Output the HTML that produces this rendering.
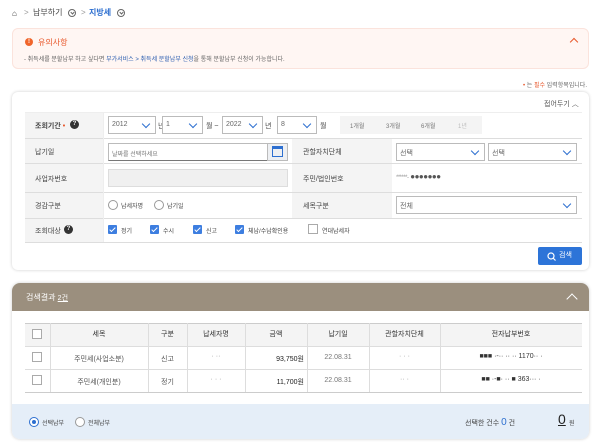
<!DOCTYPE html>
<html><head><meta charset="utf-8"><style>
*{box-sizing:border-box;margin:0;padding:0}
body{width:600px;height:442px;background:#fff;font-family:"Liberation Sans","Noto Sans CJK KR",sans-serif;font-size:7px;color:#333;position:relative;overflow:hidden}
.a{position:absolute}
.sel{position:absolute;border:1px solid #bbb;background:#fff;height:18px;font-size:7px;color:#666;padding:4px 3px}
.sel:after{content:"";position:absolute;right:6px;top:4px;width:5px;height:5px;border-right:1.4px solid #2d6fd0;border-bottom:1.4px solid #2d6fd0;transform:rotate(45deg)}
.lab{position:absolute;font-size:7px;color:#444}
.cb{position:absolute;width:9px;height:9px;background:#3d7ee0;border-radius:1px}
.cb:after{content:"";position:absolute;left:3px;top:1px;width:2px;height:5px;border-right:1.3px solid #fff;border-bottom:1.3px solid #fff;transform:rotate(45deg)}
.ecb{position:absolute;width:10px;height:10px;border:1px solid #aaa;background:#fff}
.rad{position:absolute;width:10px;height:10px;border:1px solid #999;border-radius:50%;background:#fff}
.hl{position:absolute;height:1px;background:#ddd}
.vl{position:absolute;width:1px;background:#ddd}
.th{position:absolute;top:323px;height:23px;line-height:23px;text-align:center;font-size:7px;color:#333}
.td{position:absolute;font-size:7px;color:#555;text-align:center}
.cc{position:absolute;width:8px;height:8px;border:1px solid #666;border-radius:50%}
.cc:after{content:"";position:absolute;left:2px;top:1px;width:2px;height:2px;border-right:1px solid #666;border-bottom:1px solid #666;transform:rotate(45deg)}
</style></head><body>
<div class="a" style="left:12px;top:9px;font-size:8px;color:#333">&#8962;</div>
<div class="a" style="left:24px;top:8px;font-size:8px;color:#999">&gt;</div>
<div class="a" style="left:33px;top:7px;font-size:8px;color:#444">납부하기</div>
<div class="cc" style="left:68px;top:9px"></div>
<div class="a" style="left:81px;top:8px;font-size:8px;color:#999">&gt;</div>
<div class="a" style="left:89px;top:7px;font-size:8px;color:#2d6fd0;font-weight:bold">지방세</div>
<div class="cc" style="left:117px;top:9px"></div>
<div class="a" style="left:12px;top:28px;width:577px;height:41px;background:#fff6f3;border:1px solid #fbe3dc;border-radius:6px"></div>
<div class="a" style="left:25px;top:38px;width:8px;height:8px;border-radius:50%;background:#f0652b;color:#fff;font-size:6px;text-align:center;line-height:8px;font-weight:bold">!</div>
<div class="a" style="left:38px;top:37px;font-size:8px;color:#e8572a">유의사항</div>
<div class="a" style="left:571px;top:39px;width:6px;height:6px;border-left:1.6px solid #e8572a;border-top:1.6px solid #e8572a;transform:rotate(45deg)"></div>
<div class="a" style="left:24px;top:54px;font-size:6px;color:#666">- 취득세를 분할납부 하고 싶다면 <span style="color:#2d5fb0">부가서비스 &gt; 취득세 분할납부 신청</span>을 통해 분할납부 신청이 가능합니다.</div>
<div class="a" style="left:523px;top:80px;font-size:6px;color:#666"><span style="color:#e8572a">•</span> 는 <span style="color:#e8572a">필수</span> 입력항목입니다.</div>
<div class="a" style="left:12px;top:92px;width:577px;height:178px;border-radius:6px;box-shadow:0 0 3px rgba(0,0,0,.2);background:#fff"></div>
<div class="a" style="left:544px;top:99px;font-size:7px;color:#555">접어두기 ︿</div>
<div class="a" style="left:25px;top:112px;width:78px;height:130px;background:#f4f4f4"></div>
<div class="a" style="left:292px;top:138px;width:100px;height:80px;background:#f4f4f4"></div>
<div class="hl" style="left:25px;width:557px;top:112px;background:#eee"></div>
<div class="hl" style="left:25px;width:557px;top:138px"></div>
<div class="hl" style="left:25px;width:557px;top:163px"></div>
<div class="hl" style="left:25px;width:557px;top:192px"></div>
<div class="hl" style="left:25px;width:557px;top:218px"></div>
<div class="hl" style="left:25px;width:557px;top:242px"></div>
<div class="vl" style="left:103px;top:112px;height:130px;background:#eee"></div>
<div class="lab" style="left:35px;top:121px;font-weight:bold">조회기간 <span style="color:#e8572a">•</span></div>
<div class="a" style="left:70px;top:120px;width:9px;height:9px;border-radius:50%;background:#333;color:#fff;font-size:6px;text-align:center;line-height:9px;font-weight:bold">?</div>
<div class="sel" style="left:108px;top:116px;width:48px">2012</div><div class="lab" style="left:158px;top:121px">년</div>
<div class="sel" style="left:162px;top:116px;width:41px">1</div><div class="lab" style="left:206px;top:121px">월 ~</div>
<div class="sel" style="left:222px;top:116px;width:41px">2022</div><div class="lab" style="left:265px;top:121px">년</div>
<div class="sel" style="left:277px;top:116px;width:40px">8</div><div class="lab" style="left:320px;top:121px">월</div>
<div class="a" style="left:340px;top:116px;width:142px;height:18px;background:#f4f4f4;font-size:6px;color:#777">
<span class="a" style="left:10px;top:5px">1개월</span><span class="a" style="left:46px;top:5px">3개월</span><span class="a" style="left:81px;top:5px">6개월</span><span class="a" style="left:118px;top:5px;color:#bbb">1년</span></div>
<div class="lab" style="left:35px;top:147px">납기일</div>
<div class="a" style="left:108px;top:143px;width:180px;height:18px;border:1px solid #bbb;border-bottom:1.5px solid #777;font-size:6px;color:#777;padding:5px 3px">날짜를 선택하세요</div>
<div class="a" style="left:267px;top:143px;width:21px;height:18px;background:#eef0f3;border:1px solid #bbb"></div>
<div class="a" style="left:272px;top:146px;width:11px;height:11px;border:1.3px solid #2d6fd0;border-top-width:3px"></div>
<div class="lab" style="left:303px;top:147px">관할자치단체</div>
<div class="sel" style="left:396px;top:143px;width:89px">선택</div>
<div class="sel" style="left:488px;top:143px;width:89px">선택</div>
<div class="lab" style="left:35px;top:174px">사업자번호</div>
<div class="a" style="left:108px;top:169px;width:180px;height:18px;background:#f0f0f0;border:1px solid #ddd"></div>
<div class="lab" style="left:303px;top:174px">주민/법인번호</div>
<div class="a" style="left:396px;top:172px;font-size:8px;color:#555;letter-spacing:-0.5px"><span style="font-size:6px;color:#999">******-</span> ●●●●●●●</div>
<div class="lab" style="left:35px;top:201px">경감구분</div>
<div class="rad" style="left:108px;top:200px"></div><div class="lab" style="left:121px;top:201px;font-size:6px">납세자명</div>
<div class="rad" style="left:154px;top:200px"></div><div class="lab" style="left:167px;top:201px;font-size:6px">납기일</div>
<div class="lab" style="left:303px;top:201px">세목구분</div>
<div class="sel" style="left:396px;top:196px;width:181px">전체</div>
<div class="lab" style="left:35px;top:226px">조회대상</div>
<div class="a" style="left:64px;top:225px;width:9px;height:9px;border-radius:50%;background:#333;color:#fff;font-size:6px;text-align:center;line-height:9px;font-weight:bold">?</div>
<div class="cb" style="left:108px;top:225px"></div><div class="lab" style="left:121px;top:226px;font-size:6px">정기</div>
<div class="cb" style="left:150px;top:225px"></div><div class="lab" style="left:163px;top:226px;font-size:6px">수시</div>
<div class="cb" style="left:193px;top:225px"></div><div class="lab" style="left:206px;top:226px;font-size:6px">신고</div>
<div class="cb" style="left:235px;top:225px"></div><div class="lab" style="left:248px;top:226px;font-size:6px">체납/수납확인용</div>
<div class="ecb" style="left:308px;top:224px"></div><div class="lab" style="left:322px;top:226px;font-size:6px">연대납세자</div>
<div class="a" style="left:538px;top:247px;width:44px;height:18px;background:#2d74d8;border-radius:2px;color:#fff;font-size:7px;line-height:18px"><svg class="a" style="left:9px;top:5px" width="9" height="9" viewBox="0 0 9 9"><circle cx="4" cy="4" r="3" fill="none" stroke="#fff" stroke-width="1.2"/><path d="M6 6L8.5 8.5" stroke="#fff" stroke-width="1.2"/></svg><span class="a" style="left:21px;top:0">검색</span></div>
<div class="a" style="left:12px;top:283px;width:577px;height:156px;border-radius:8px;box-shadow:0 0 3px rgba(0,0,0,.2);background:#fff;overflow:hidden">
<div class="a" style="left:0;top:0;width:577px;height:28px;background:#9b8f7e"></div>
<div class="a" style="left:0;top:121px;width:577px;height:40px;background:#e5eef8"></div>
</div>
<div class="a" style="left:26px;top:292px;font-size:8px;color:#fff">검색결과 <span style="text-decoration:underline;font-size:7px">2건</span></div>
<div class="a" style="left:568px;top:295px;width:8px;height:8px;border-left:1.5px solid #fff;border-top:1.5px solid #fff;transform:rotate(45deg)"></div>
<div class="a" style="left:25px;top:323px;width:557px;height:23px;background:#f4f4f4"></div>
<div class="hl" style="left:25px;width:557px;top:323px;background:#ccc"></div>
<div class="hl" style="left:25px;width:557px;top:346px"></div>
<div class="hl" style="left:25px;width:557px;top:369px"></div>
<div class="hl" style="left:25px;width:557px;top:392px;background:#ccc"></div>
<div class="vl" style="left:50px;top:323px;height:69px"></div>
<div class="vl" style="left:148px;top:323px;height:69px"></div>
<div class="vl" style="left:187px;top:323px;height:69px"></div>
<div class="vl" style="left:245px;top:323px;height:69px"></div>
<div class="vl" style="left:307px;top:323px;height:69px"></div>
<div class="vl" style="left:369px;top:323px;height:69px"></div>
<div class="vl" style="left:440px;top:323px;height:69px"></div>
<div class="ecb" style="left:32px;top:329px"></div>
<div class="th" style="left:50px;width:98px">세목</div>
<div class="th" style="left:148px;width:39px">구분</div>
<div class="th" style="left:187px;width:58px">납세자명</div>
<div class="th" style="left:245px;width:62px">금액</div>
<div class="th" style="left:307px;width:62px">납기일</div>
<div class="th" style="left:369px;width:71px">관할자치단체</div>
<div class="th" style="left:440px;width:142px">전자납부번호</div>
<div class="ecb" style="left:32px;top:352px"></div>
<div class="td" style="left:50px;width:98px;top:354px">주민세(사업소분)</div>
<div class="td" style="left:148px;width:39px;top:354px">신고</div>
<div class="td" style="left:187px;width:58px;top:353px;color:#999">· ··</div>
<div class="td" style="left:245px;width:59px;top:354px;text-align:right;color:#222">93,750원</div>
<div class="td" style="left:307px;width:62px;top:354px;color:#777">22.08.31</div>
<div class="td" style="left:369px;width:71px;top:353px;color:#999">· · ·</div>
<div class="td" style="left:440px;width:142px;top:353px;color:#333">■■■ ·-·· ·· ·· 1170·· ·</div>
<div class="ecb" style="left:32px;top:375px"></div>
<div class="td" style="left:50px;width:98px;top:377px">주민세(개인분)</div>
<div class="td" style="left:148px;width:39px;top:377px">정기</div>
<div class="td" style="left:187px;width:58px;top:376px;color:#999">· · ·</div>
<div class="td" style="left:245px;width:59px;top:377px;text-align:right;color:#222">11,700원</div>
<div class="td" style="left:307px;width:62px;top:377px;color:#777">22.08.31</div>
<div class="td" style="left:369px;width:71px;top:376px;color:#999">·· ·</div>
<div class="td" style="left:440px;width:142px;top:376px;color:#333">■■ ·-■· ·· ■ 363··· ·</div>
<div class="rad" style="left:29px;top:417px;border-color:#2d6fd0"></div>
<div class="a" style="left:32px;top:420px;width:4px;height:4px;border-radius:50%;background:#2d6fd0"></div>
<div class="lab" style="left:42px;top:418px;font-size:6px">선택납부</div>
<div class="rad" style="left:75px;top:417px"></div>
<div class="lab" style="left:88px;top:418px;font-size:6px">전체납부</div>
<div class="lab" style="left:465px;top:417px;font-size:7px">선택한 건수 <span style="color:#2d6fd0;font-size:10px">0</span> 건</div>
<div class="a" style="left:558px;top:411px;font-size:14px;color:#222;text-decoration:underline">0</div>
<div class="lab" style="left:569px;top:418px;font-size:6px">원</div>
</body></html>
